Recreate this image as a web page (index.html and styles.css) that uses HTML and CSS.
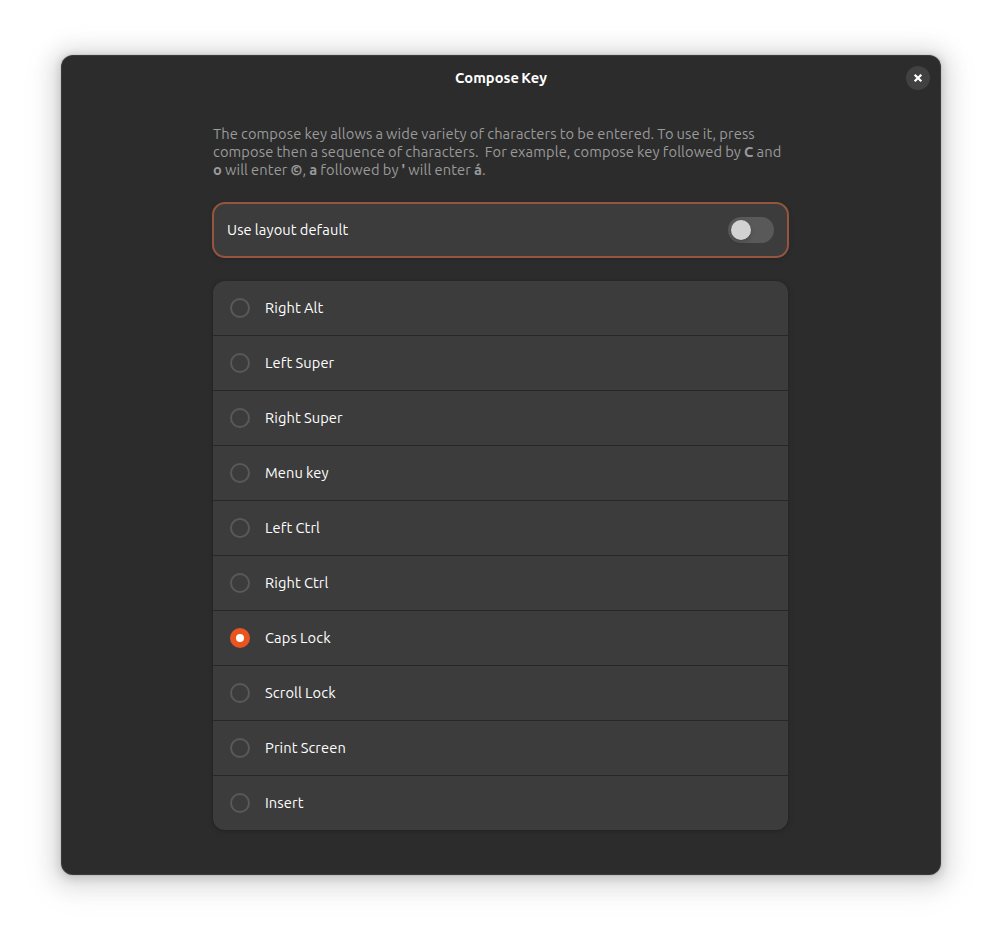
FILE: index.html
```html
<!DOCTYPE html>
<html lang="en">
<head>
<meta charset="utf-8">
<title>Compose Key</title>
<link rel="stylesheet" href="styles.css">
</head>
<body>
<main class="window">
  <header class="titlebar">
    <h1 class="title">Compose Key</h1>
    <button class="close" aria-label="Close"><svg width="10" height="10" viewBox="0 0 10 10"><path d="M1.7 1.7 8.3 8.3M8.3 1.7 1.7 8.3" fill="none" stroke="#fff" stroke-width="2.3"/></svg></button>
  </header>
  <section class="content">
    <p class="intro"><span class="line">The compose key allows a wide variety of characters to be entered. To use it, press</span>
<span class="line">compose then a sequence of characters.&nbsp; For example, compose key followed by <b>C</b> and</span>
<span class="line"><b>o</b> will enter <b>©</b>, <b>a</b> followed by <b>'</b> will enter <b>á</b>.</span></p>
    <div class="card default-row"><span>Use layout default</span><span class="switch"><span class="knob"></span></span></div>
    <ul class="card list">
      <li class="row"><span class="radio"></span><span>Right Alt</span></li>
      <li class="row"><span class="radio"></span><span>Left Super</span></li>
      <li class="row"><span class="radio"></span><span>Right Super</span></li>
      <li class="row"><span class="radio"></span><span>Menu key</span></li>
      <li class="row"><span class="radio"></span><span>Left Ctrl</span></li>
      <li class="row"><span class="radio"></span><span>Right Ctrl</span></li>
      <li class="row"><span class="radio checked"></span><span>Caps Lock</span></li>
      <li class="row"><span class="radio"></span><span>Scroll Lock</span></li>
      <li class="row"><span class="radio"></span><span>Print Screen</span></li>
      <li class="row"><span class="radio"></span><span>Insert</span></li>
    </ul>
  </section>
</main>
</body>
</html>
```
FILE: styles.css
```css
* { box-sizing: border-box; }
body {
  margin: 0;
  height: 942px;
  overflow: hidden;
  padding: 55px 61px;
  background: #fff;
  color: #fff;
  font: 14.667px/18px Ubuntu, "Noto Sans", sans-serif;
  letter-spacing: .12px;
  word-spacing: -.45px;
}
.window {
  width: 880px;
  height: 820px;
  border-radius: 12px;
  background: #2c2c2c;
  box-shadow: inset 0 0 0 1px rgba(255,255,255,.07), 0 0 0 1px rgba(0,0,0,.05), 0 2px 8px 2px rgba(0,0,0,.13), 0 3px 20px 10px rgba(0,0,0,.09), 0 6px 32px 16px rgba(0,0,0,.04);
}
.titlebar {
  display: grid;
  grid-template-columns: 1fr auto 1fr;
  align-items: center;
  height: 46px;
  padding: 0 11px;
}
.title {
  grid-column: 2;
  margin: 0;
  font-size: 14.667px;
  line-height: 18px;
  font-weight: 700;
  letter-spacing: .05px;
  word-spacing: -1.2px;
}
.close {
  justify-self: end;
  display: grid;
  place-items: center;
  width: 24px;
  height: 24px;
  padding: 0;
  border: 0;
  border-radius: 50%;
  background: #414141;
}
.content {
  width: 575px;
  margin: 24px 0 0 152px;
}
.intro { margin: 0 0 24px; color: #9a9a9a; }
.line { display: block; white-space: nowrap; }
.card {
  background: #3c3c3c;
  border-radius: 12px;
  box-shadow: 0 0 0 1px rgba(0,0,0,.04), 0 1px 3px 1px rgba(0,0,0,.08), 0 2px 6px 2px rgba(0,0,0,.04);
}
.default-row {
  display: flex;
  align-items: center;
  justify-content: space-between;
  height: 54px;
  padding: 0 14px;
  outline: 2px solid #95553f;
  outline-offset: -1px;
}
.switch {
  display: flex;
  width: 46px;
  height: 26px;
  padding: 3px;
  border-radius: 13px;
  background: #595959;
}
.knob {
  width: 20px;
  height: 20px;
  border-radius: 50%;
  background: #d2d2d2;
  box-shadow: 0 2px 4px rgba(0,0,0,.2);
}
.list { list-style: none; margin: 24px 0 0; padding: 0; }
.row {
  display: flex;
  align-items: center;
  gap: 15px;
  height: 55px;
  padding-left: 17px;
  border-bottom: 1px solid #272727;
}
.row:last-child { height: 54px; border-bottom: 0; }
.radio {
  width: 20px;
  height: 20px;
  border: 2px solid #595959;
  border-radius: 50%;
}
.checked { border: 6px solid #e95420; background: #fff; }
```
